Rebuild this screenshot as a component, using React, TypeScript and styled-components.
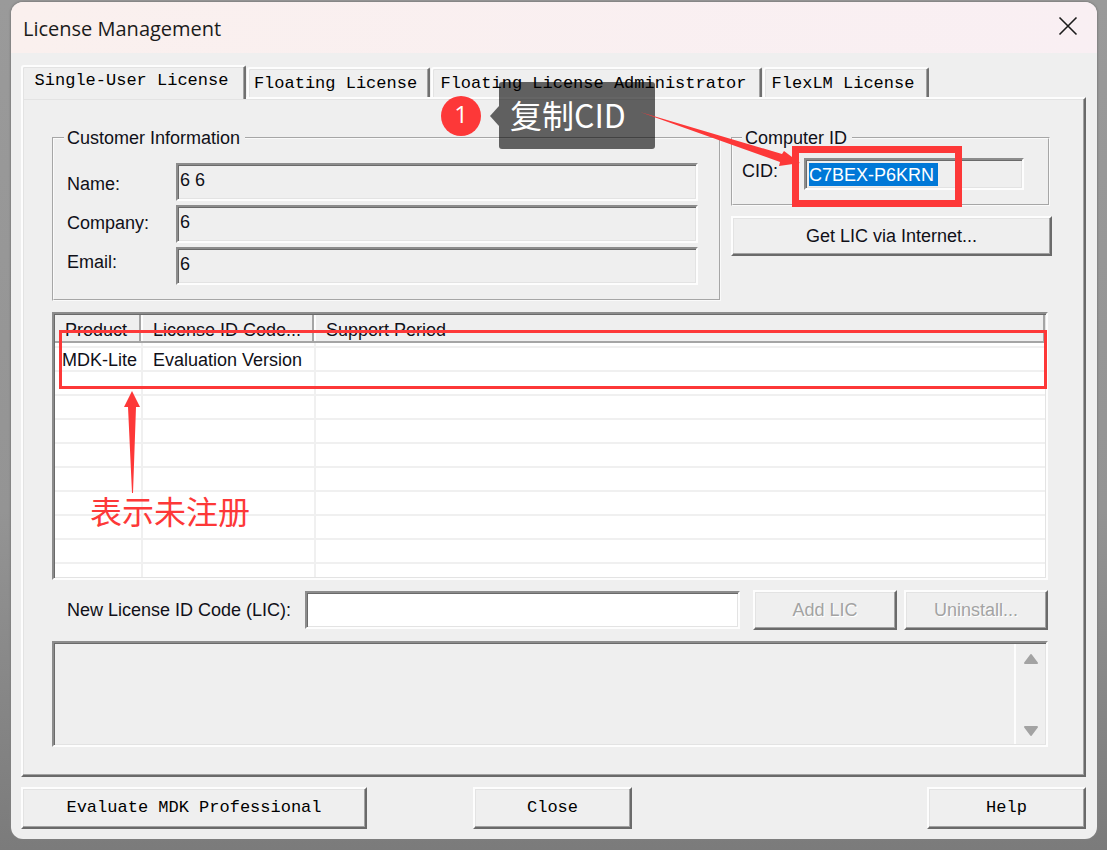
import React from "react";
import styled, { createGlobalStyle, css } from "styled-components";

const RED = "#fd3838";
const FACE = "#efefef";
const UI = '"Liberation Sans", Arial, sans-serif';
const MONO = '"Liberation Mono", "Courier New", monospace';
const NOTE = '"Noto Sans CJK SC", "Noto Sans", sans-serif';

const raised = css`
  border: 2px solid;
  border-color: #fdfdfd #6a6a6a #6a6a6a #fdfdfd;
  box-shadow: inset -1px -1px 0 #a2a2a2, inset 1px 1px 0 #e3e3e3;
`;

const sunken = css`
  border: 2px solid;
  border-color: #8c8c8c #fdfdfd #fdfdfd #8c8c8c;
  box-shadow: inset 1px 1px 0 #6a6a6a, inset -1px -1px 0 #e3e3e3;
`;

const GlobalStyle = createGlobalStyle`
  *, *::before, *::after { box-sizing: border-box; }
  body { margin: 0; background: #fff; }
  button, input, textarea { font: inherit; color: inherit; margin: 0; }
`;

const Desktop = styled.div`
  padding: 2px 10px 11px 11px;
  background: linear-gradient(#9a9a9a, #949494 60%, #7b7b7b);
  font: 18px/20px ${UI};
  color: #101018;
`;

const Window = styled.main`
  display: flex;
  flex-direction: column;
  border-radius: 12px;
  overflow: hidden;
  background: ${FACE};
  box-shadow: 0 0 2px 1px #808080;
`;

const TitleBar = styled.header`
  display: flex;
  align-items: center;
  justify-content: space-between;
  height: 51px;
  padding: 0 19px 0 12px;
  background: linear-gradient(90deg, #faf0ee, #f9eff3);
`;

const Title = styled.h1`
  margin: 0;
  padding-top: 2px;
  font: 400 20px/28px "Open Sans", "Noto Sans", sans-serif;
  color: #1b1b1b;
`;

const CloseIconButton = styled.button`
  display: flex;
  padding: 0 0 3px;
  border: 0;
  background: none;
`;

const Body = styled.div`
  padding: 12px 11px 10px 10px;
`;

const TabList = styled.div`
  display: flex;
  align-items: flex-end;
  gap: 1px;
`;

const Tab = styled.button<{ $width: number; $active?: boolean }>`
  width: ${(p) => p.$width}px;
  height: ${(p) => (p.$active ? 34 : 30)}px;
  margin-bottom: ${(p) => (p.$active ? -2 : 0)}px;
  padding: ${(p) => (p.$active ? "0 4px 4px 0" : "2px 6px 0 0")};
  position: relative;
  z-index: ${(p) => (p.$active ? 1 : 0)};
  border: 2px solid;
  border-color: #fdfdfd #707070 transparent #fdfdfd;
  border-bottom: 0;
  border-radius: 3px 2px 0 0;
  background: ${FACE};
  box-shadow: inset -1px 0 0 #a2a2a2, inset 1px 1px 0 #e3e3e3;
  font: 17px/20px ${MONO};
  color: #000;
  white-space: nowrap;
`;

const Panel = styled.section`
  ${raised}
  padding: 29px 32px 28px 29px;
`;

const Columns = styled.div`
  display: flex;
  gap: 10px;
`;

const Group = styled.fieldset`
  min-width: 0;
  margin: 0;
  border: 2px groove #fafafa;
`;

const CustomerGroup = styled(Group)`
  flex: 1;
  padding: 15px 21px 14px 13px;
`;

const Fields = styled.div`
  display: flex;
`;

const LabelColumn = styled.div`
  display: flex;
  flex-direction: column;
  width: 109px;
  padding-top: 2px;
  line-height: 39px;
`;

const InputColumn = styled.div`
  display: flex;
  flex: 1;
  min-width: 0;
  flex-direction: column;
  gap: 4px;
`;

const Legend = styled.legend`
  margin-left: -3px;
  padding: 0 5px 0 3px;
  line-height: 20px;
`;

const TextField = styled.input<{ $white?: boolean }>`
  ${sunken}
  flex: 1 1 auto;
  min-width: 0;
  height: 38px;
  padding: 0 4px 4px 2px;
  border-radius: 0;
  outline: 0;
  background: ${(p) => (p.$white ? "#fff" : FACE)};
`;

const SideColumn = styled.div`
  position: relative;
  display: flex;
  flex-direction: column;
  gap: 10px;
  width: 321px;
`;

const ComputerGroup = styled(Group)`
  margin-right: 2px;
  padding: 10px 24px 14px 9px;
`;

const CidLegend = styled(Legend)`
  margin-left: 0;
`;

const CidRow = styled.div`
  display: flex;
  justify-content: space-between;
  align-items: flex-start;
  line-height: 26px;
`;

const CidFrame = styled.div`
  ${sunken}
  display: flex;
  width: 220px;
  height: 32px;
  padding: 3px;
`;

const CidInput = styled.input`
  width: 129px;
  height: 23px;
  padding: 0;
  border: 0;
  outline: 0;
  background: #0078d7;
  color: #fff;
`;

const PushButton = styled.button<{ $width?: number; $mono?: boolean }>`
  ${raised}
  flex: none;
  width: ${(p) => (p.$width ? `${p.$width}px` : "100%")};
  height: ${(p) => (p.$mono ? 42 : 40)}px;
  padding: 0;
  border-radius: 0;
  background: ${FACE};
  font: ${(p) => (p.$mono ? `17px/20px ${MONO}` : `18px/20px ${UI}`)};
  color: ${(p) => (p.$mono ? "#000" : "#101018")};
  white-space: nowrap;
  &:disabled {
    color: #a3a3a3;
    text-shadow: 1px 1px 0 #fff;
  }
`;

const ListFrame = styled.div`
  ${sunken}
  position: relative;
  height: 268px;
  margin: 11px 4px 10px 0;
  padding: 1px;
  background: #fff;
`;

const List = styled.table`
  width: 100%;
  border-collapse: separate;
  border-spacing: 0;
  table-layout: fixed;
  th {
    height: 28px;
    padding: 4px 0 0 10px;
    border-bottom: 2px solid #a5a5a5;
    background: ${FACE};
    box-shadow: inset -2px 0 0 #fdfdfd, inset -4px 0 0 #a5a5a5;
    font-weight: 400;
    text-align: left;
    white-space: nowrap;
  }
  th:last-child {
    box-shadow: inset -2px 0 0 #a5a5a5;
  }
  td {
    height: 24px;
    padding: 2px 0 0 10px;
    border-bottom: 2px solid #f0f0f0;
    border-right: 2px solid #f0f0f0;
    white-space: nowrap;
  }
  td:first-child {
    padding-left: 7px;
  }
  td:last-child {
    border-right: 0;
  }
`;

const EdgeRow = styled.tr<{ $height: number; $open?: boolean }>`
  td {
    height: ${(p) => p.$height}px;
    padding: 0;
    border-bottom-width: ${(p) => (p.$open ? 0 : 2)}px;
  }
`;

const Outline = styled.div`
  position: absolute;
  top: 16px;
  right: -1px;
  left: 5px;
  height: 59px;
  border: 3px solid ${RED};
  pointer-events: none;
`;

const UnregisteredNote = styled.div`
  position: absolute;
  top: 77px;
  left: 36px;
  display: flex;
  flex-direction: column;
  font: 32px/34px ${NOTE};
  color: ${RED};
  svg {
    margin-left: 33px;
  }
`;

const LicRow = styled.div`
  display: flex;
  align-items: center;
  gap: 7px;
  margin: 0 4px 11px 15px;
`;

const LicLabel = styled.label`
  flex: none;
  width: 231px;
`;

const LicField = styled(TextField)`
  margin-right: 6px;
`;

const OutputFrame = styled.div`
  ${sunken}
  display: flex;
  height: 106px;
  margin-right: 4px;
  padding: 1px;
`;

const Output = styled.textarea`
  flex: 1;
  min-width: 0;
  padding: 4px;
  border: 0;
  outline: 0;
  resize: none;
  background: transparent;
`;

const ScrollStrip = styled.div`
  display: flex;
  flex-direction: column;
  justify-content: space-between;
  width: 31px;
  padding: 9px 0 7px;
  border-left: 2px solid #fdfdfd;
`;

const ScrollButton = styled.button`
  display: flex;
  justify-content: center;
  padding: 0;
  border: 0;
  background: none;
`;

const Footer = styled.footer`
  display: flex;
  margin-top: 10px;
`;

const CloseSlot = styled.div`
  flex: 1;
  padding-left: 106px;
`;

const CidOutline = styled.div`
  position: absolute;
  top: 18px;
  left: 61px;
  width: 170px;
  height: 61px;
  border: 7px solid ${RED};
  pointer-events: none;
`;

const CidArrow = styled.svg`
  position: absolute;
  top: -18px;
  left: -92px;
  z-index: 2;
  pointer-events: none;
`;

const Callout = styled.div`
  position: absolute;
  top: -46px;
  left: -290px;
  z-index: 2;
  display: flex;
  align-items: center;
  pointer-events: none;
`;

const StepBadge = styled.span`
  width: 40px;
  height: 40px;
  margin-right: 9px;
  border-radius: 50%;
  background: ${RED};
  color: #fff;
  font: 24px/36px "Open Sans", "Noto Sans", sans-serif;
  text-align: center;
`;

const CalloutText = styled.span`
  width: 156px;
  height: 67px;
  padding-left: 11px;
  border-radius: 3px;
  background: rgba(0, 0, 0, 0.6);
  color: #fff;
  font: 32px/64px ${NOTE};
  white-space: nowrap;
`;

const tabs = [
  { label: "Single-User License", width: 225 },
  { label: "Floating License", width: 183 },
  { label: "Floating License Administrator", width: 331 },
  { label: "FlexLM License", width: 166 },
];

const customer = [
  { id: "name", label: "Name:", value: "6 6" },
  { id: "company", label: "Company:", value: "6" },
  { id: "email", label: "Email:", value: "6" },
];

const emptyRows = Array.from({ length: 8 }, (_, i) => i);

export default function App() {
  return (
    <>
      <GlobalStyle />
      <Desktop>
        <Window>
          <TitleBar>
            <Title>License Management</Title>
            <CloseIconButton aria-label="Close window">
              <svg width="20" height="20" viewBox="0 0 20 20" fill="none" stroke="#1b1b1b" strokeWidth="1.6">
                <path d="M1.5 1.5 18.5 18.5M18.5 1.5 1.5 18.5" />
              </svg>
            </CloseIconButton>
          </TitleBar>
          <Body>
            <TabList role="tablist">
              {tabs.map((tab, i) => (
                <Tab key={tab.label} role="tab" aria-selected={i === 0} $active={i === 0} $width={tab.width}>
                  {tab.label}
                </Tab>
              ))}
            </TabList>
            <Panel>
              <Columns>
                <CustomerGroup>
                  <Legend>Customer Information</Legend>
                  <Fields>
                    <LabelColumn>
                      {customer.map((f) => (
                        <label key={f.id} htmlFor={f.id}>
                          {f.label}
                        </label>
                      ))}
                    </LabelColumn>
                    <InputColumn>
                      {customer.map((f) => (
                        <TextField key={f.id} id={f.id} defaultValue={f.value} readOnly />
                      ))}
                    </InputColumn>
                  </Fields>
                </CustomerGroup>
                <SideColumn>
                  <ComputerGroup>
                    <CidLegend>Computer ID</CidLegend>
                    <CidRow>
                      <label htmlFor="cid">CID:</label>
                      <CidFrame>
                        <CidInput id="cid" defaultValue="C7BEX-P6KRN" readOnly />
                      </CidFrame>
                    </CidRow>
                  </ComputerGroup>
                  <PushButton>Get LIC via Internet...</PushButton>
                  <CidOutline />
                  <Callout>
                    <StepBadge>1</StepBadge>
                    <svg width="9" height="20" viewBox="0 0 9 20">
                      <path d="M9 0v20L0 10Z" fill="#000" fillOpacity="0.6" />
                    </svg>
                    <CalloutText>复制CID</CalloutText>
                  </Callout>
                  <CidArrow width="162" height="60" viewBox="0 0 162 60">
                    <path d="M1 2 143 44 145 41 161 53 140 56 141 52Z" fill={RED} />
                  </CidArrow>
                </SideColumn>
              </Columns>
              <ListFrame>
                <List>
                  <colgroup>
                    <col width="88" />
                    <col width="173" />
                    <col />
                  </colgroup>
                  <thead>
                    <tr>
                      <th>Product</th>
                      <th>License ID Code...</th>
                      <th>Support Period</th>
                    </tr>
                  </thead>
                  <tbody>
                    <EdgeRow $height={5}>
                      <td />
                      <td />
                      <td />
                    </EdgeRow>
                    <tr>
                      <td>MDK-Lite</td>
                      <td>Evaluation Version</td>
                      <td />
                    </tr>
                    {emptyRows.map((i) => (
                      <tr key={i}>
                        <td />
                        <td />
                        <td />
                      </tr>
                    ))}
                    <EdgeRow $height={13} $open>
                      <td />
                      <td />
                      <td />
                    </EdgeRow>
                  </tbody>
                </List>
                <Outline />
                <UnregisteredNote>
                  <svg width="18" height="102" viewBox="0 0 18 102">
                    <path d="M9 0 17 16H13L10 102H9L5 16H1Z" fill={RED} />
                  </svg>
                  表示未注册
                </UnregisteredNote>
              </ListFrame>
              <LicRow>
                <LicLabel htmlFor="lic">New License ID Code (LIC):</LicLabel>
                <LicField id="lic" $white />
                <PushButton $width={144} disabled>
                  Add LIC
                </PushButton>
                <PushButton $width={144} disabled>
                  Uninstall...
                </PushButton>
              </LicRow>
              <OutputFrame>
                <Output aria-label="Messages" readOnly />
                <ScrollStrip>
                  <ScrollButton aria-label="Scroll up">
                    <svg width="16" height="12" viewBox="0 0 16 12">
                      <path d="M8 2 14 10H2Z" fill="#a3a3a3" stroke="#a3a3a3" strokeWidth="2" strokeLinejoin="round" />
                    </svg>
                  </ScrollButton>
                  <ScrollButton aria-label="Scroll down">
                    <svg width="16" height="12" viewBox="0 0 16 12">
                      <path d="M8 10 14 2H2Z" fill="#a3a3a3" stroke="#a3a3a3" strokeWidth="2" strokeLinejoin="round" />
                    </svg>
                  </ScrollButton>
                </ScrollStrip>
              </OutputFrame>
            </Panel>
            <Footer>
              <PushButton $mono $width={346}>
                Evaluate MDK Professional
              </PushButton>
              <CloseSlot>
                <PushButton $mono $width={159}>
                  Close
                </PushButton>
              </CloseSlot>
              <PushButton $mono $width={159}>
                Help
              </PushButton>
            </Footer>
          </Body>
        </Window>
      </Desktop>
    </>
  );
}
